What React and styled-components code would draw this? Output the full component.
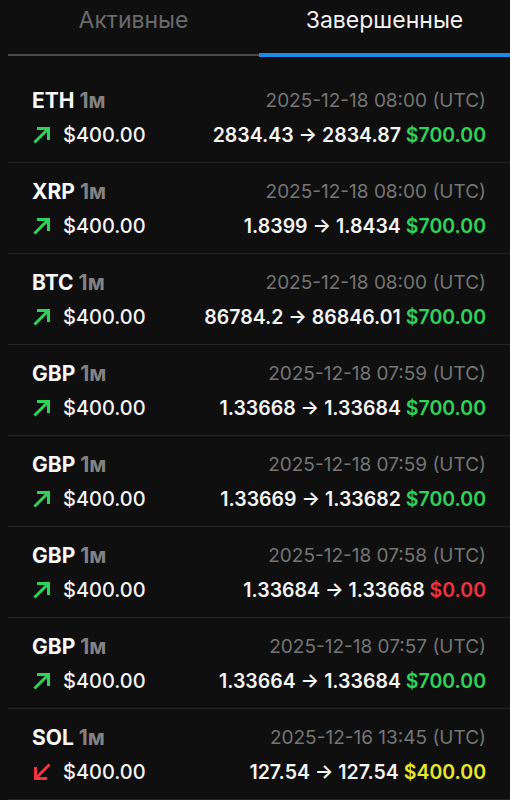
import React from "react";
import styled, { createGlobalStyle } from "styled-components";

const GlobalStyle = createGlobalStyle`
  body {
    margin: 0;
    background: #0f0f0f;
    font-family: Inter, "Liberation Sans", sans-serif;
    color: #fff;
  }
`;

const Screen = styled.div`
  width: 510px;
  height: 800px;
  overflow: hidden;
  background: #0f0f0f;
`;

const Tabs = styled.div`
  display: flex;
  align-items: flex-start;
  padding-left: 8px;
`;

const Tab = styled.div`
  flex: 1;
  text-align: center;
  font-size: 23px;
  line-height: 28px;
  padding-top: 6px;
  padding-bottom: ${(p) => (p.$active ? "19px" : "20px")};
  color: ${(p) => (p.$active ? "#f2f2f2" : "#6a6a6a")};
  border-bottom: ${(p) => (p.$active ? "4px solid #1e88e5" : "2px solid #4a4a4a")};
`;

const List = styled.div`
  padding-top: 15px;
  margin-left: 8px;
`;

const Row = styled.div`
  padding: 16px 24px 15px 24px;
  border-bottom: 1px solid #242424;
  display: flex;
  flex-direction: column;
  gap: 11px;
`;

const Line = styled.div`
  display: flex;
  justify-content: space-between;
  align-items: center;
  height: 24px;
`;

const Ticker = styled.span`
  font-size: 21px;
  font-weight: 700;
  color: #fafafa;
`;

const Period = styled.span`
  font-size: 21px;
  font-weight: 700;
  color: #828282;
  margin-left: 5px;
`;

const Date = styled.span`
  font-size: 19px;
  color: #757575;
`;

const Stake = styled.div`
  display: flex;
  align-items: center;
  gap: 12px;
  font-size: 20px;
  font-weight: 500;
  color: #f4f4f4;
`;

const Prices = styled.div`
  font-size: 19.5px;
  font-weight: 600;
  color: #f4f4f4;
`;

const Payout = styled.span`
  color: ${(p) => p.$color};
`;

const Icon = styled.svg`
  width: 18px;
  height: 18px;
  margin-left: 1px;
  flex: none;
`;

const colors = {
  win: "#2fd35a",
  loss: "#ef3340",
  draw: "#e8e82a",
};

const Arrow = ({ up }) => (
  <Icon viewBox="0 0 18 18" fill="none" stroke={up ? colors.win : colors.loss} strokeWidth="3" strokeLinecap="square">
    {up ? (
      <path d="M2.5 15.5 L15 3 M5.5 2.5 H15.5 V12.5" />
    ) : (
      <path d="M15.5 2.5 L3 15 M2.5 5.5 V15.5 H12.5" />
    )}
  </Icon>
);

const trades = [
  { sym: "ETH", date: "2025-12-18 08:00", up: true, from: "2834.43", to: "2834.87", pay: "$700.00", res: "win" },
  { sym: "XRP", date: "2025-12-18 08:00", up: true, from: "1.8399", to: "1.8434", pay: "$700.00", res: "win" },
  { sym: "BTC", date: "2025-12-18 08:00", up: true, from: "86784.2", to: "86846.01", pay: "$700.00", res: "win" },
  { sym: "GBP", date: "2025-12-18 07:59", up: true, from: "1.33668", to: "1.33684", pay: "$700.00", res: "win" },
  { sym: "GBP", date: "2025-12-18 07:59", up: true, from: "1.33669", to: "1.33682", pay: "$700.00", res: "win" },
  { sym: "GBP", date: "2025-12-18 07:58", up: true, from: "1.33684", to: "1.33668", pay: "$0.00", res: "loss" },
  { sym: "GBP", date: "2025-12-18 07:57", up: true, from: "1.33664", to: "1.33684", pay: "$700.00", res: "win" },
  { sym: "SOL", date: "2025-12-16 13:45", up: false, from: "127.54", to: "127.54", pay: "$400.00", res: "draw" },
];

export default function App() {
  return (
    <Screen>
      <GlobalStyle />
      <Tabs>
        <Tab>Активные</Tab>
        <Tab $active>Завершенные</Tab>
      </Tabs>
      <List>
        {trades.map((t, i) => (
          <Row key={i}>
            <Line>
              <span>
                <Ticker>{t.sym}</Ticker>
                <Period>1м</Period>
              </span>
              <Date>{t.date} (UTC)</Date>
            </Line>
            <Line>
              <Stake>
                <Arrow up={t.up} />
                $400.00
              </Stake>
              <Prices>
                {t.from} → {t.to} <Payout $color={colors[t.res]}>{t.pay}</Payout>
              </Prices>
            </Line>
          </Row>
        ))}
      </List>
    </Screen>
  );
}
